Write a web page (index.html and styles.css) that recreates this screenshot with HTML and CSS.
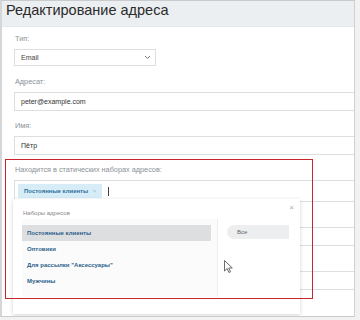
FILE: index.html
```
<!DOCTYPE html>
<html lang="ru">
<head>
    <meta charset="UTF-8">
    <title>Редактирование адреса</title>
    <link rel="stylesheet" href="styles.css">
</head>
<body>
    <div class="window">
        <div class="header">
            <h1>Редактирование адреса</h1>
        </div>

        <div class="form">
            <div class="field field-select">
                <label>Тип:</label>
                <div class="select">
                    <span>Email</span>
                    <svg class="chevron" width="7" height="5" viewBox="0 0 7 5"><path d="M1 1l2.5 2.5L6 1" fill="none" stroke="#777" stroke-width="1"/></svg>
                </div>
            </div>
            <div class="field">
                <label>Адресат:</label>
                <div class="input">peter@example.com</div>
            </div>
            <div class="field">
                <label>Имя:</label>
                <div class="input">Пётр</div>
            </div>
            <div class="field">
                <label>Находится в статических наборах адресов:</label>
                <div class="input tags">
                    <span class="tag">Постоянные клиенты <span class="tag-x">×</span></span>
                    <span class="caret"></span>
                </div>
            </div>
            <!-- fields below are covered by the dropdown -->
            <div class="field">
                <div class="label-space"></div>
                <div class="input"></div>
            </div>
            <div class="field">
                <div class="label-space"></div>
                <div class="input"></div>
            </div>
        </div>

        <!-- dropdown with address sets -->
        <div class="popup">
            <div class="popup-title">Наборы адресов</div>
            <span class="popup-close">×</span>
            <div class="popup-body">
                <ul class="sets">
                    <li class="active">Постоянные клиенты</li>
                    <li>Оптовики</li>
                    <li>Для рассылки "Аксессуары"</li>
                    <li>Мужчины</li>
                </ul>
                <div class="filters">
                    <div class="filter">Все</div>
                </div>
            </div>
        </div>

        <div class="highlight"></div>

        <svg class="pointer" width="9" height="13" viewBox="0 0 9 13"><path d="M0.5 0.5v10.5l2.6-2.4 1.8 3.9 1.6-0.7-1.8-3.8h3.6z" fill="#fff" stroke="#444" stroke-width="0.8"/></svg>
    </div>
</body>
</html>
```

FILE: styles.css
```
* { box-sizing: border-box; }
body { margin: 0; background: #f2f2f2; font-family: "Liberation Sans", Arial, sans-serif; }
.window { position: relative; width: 355px; height: 317px; background: #fff; border-top: 1px solid #c9cbcd; border-left: 2px solid #d4d6d8; border-right: 1px solid #cfd1d3; border-bottom: 1px solid #c9cbcd; overflow: hidden; }
.header { height: 26px; background: #eceff1; border-bottom: 1px solid #e6e8ea; padding: 0 0 0 4px; }
.header h1 { margin: 0; font-weight: normal; font-size: 14.5px; line-height: 18px; color: #2a2a2a; }
.form { padding: 6px 0 0 12px; }
.field { margin-bottom: 9px; }
.field-select { margin-bottom: 10px; }
.field label, .label-space { display: block; font-size: 7.3px; line-height: 12px; height: 12px; color: #8b9196; margin-bottom: 4px; padding-left: 1px; }
.select { width: 142px; height: 17px; border: 1px solid #dcdfe2; display: flex; align-items: center; justify-content: space-between; padding: 0 4px 0 6px; font-size: 7px; color: #444; }
.input { height: 19px; border: 1px solid #dcdfe2; border-right: none; display: flex; align-items: center; padding-left: 6px; font-size: 7px; color: #333; }
.tags { height: 22px; padding-left: 3px; }
.tag { background: #d6edf8; color: #2f6f9c; font-weight: bold; font-size: 6px; padding: 4px 6px; border-radius: 1px; }
.tag-x { color: #9bbfd4; font-weight: normal; margin-left: 3px; }
.caret { width: 1px; height: 9px; background: #444; margin-left: 6px; }
.popup { position: absolute; left: 11px; top: 198px; width: 287px; height: 115px; background: #fff; box-shadow: 0 1px 4px rgba(0, 0, 0, 0.18); }
.popup-title { font-size: 6px; color: #888; padding: 10px 0 0 10px; line-height: 8px; }
.popup-close { position: absolute; right: 6px; top: 4px; font-size: 8px; color: #aaa; }
.popup-body { display: flex; margin-top: 2px; padding-left: 9px; }
.sets { list-style: none; margin: 0; padding: 6px 0 6px 0; width: 196px; background: #fbfbfb; border-right: 1px solid #eeeeee; height: 78px; }
.sets li { font-size: 6px; font-weight: bold; color: #2d5f8c; line-height: 16px; padding-left: 5px; margin-right: 6px; }
.sets li.active { background: #dcdee0; }
.filters { padding: 6px 0 0 9px; }
.filter { width: 62px; height: 14px; background: #eceeef; border-radius: 7px 0 0 7px; font-size: 6px; color: #666; line-height: 14px; padding-left: 10px; }
.highlight { position: absolute; left: 3px; top: 158px; width: 308px; height: 140px; border: 1.5px solid #c9252d; }
.pointer { position: absolute; left: 222px; top: 259px; }
```
